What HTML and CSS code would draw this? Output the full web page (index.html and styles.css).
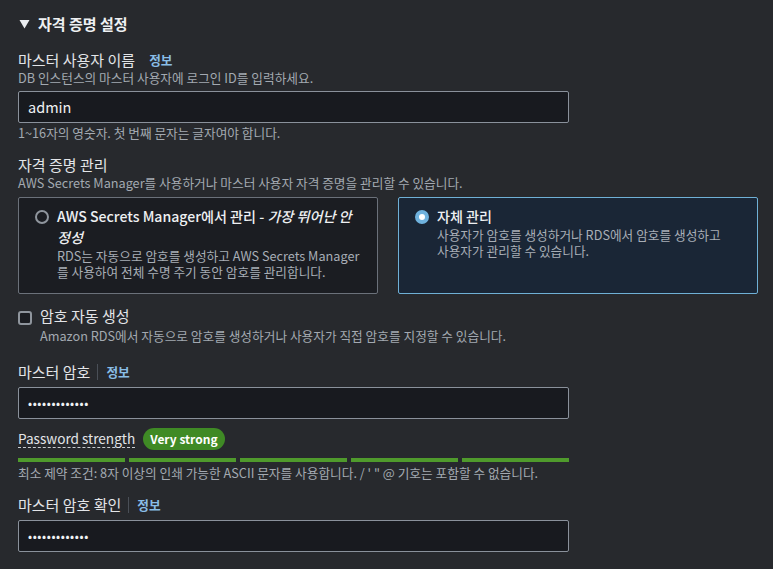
FILE: index.html
```html
<html>
<head>
<meta charset="utf-8">
<link rel="stylesheet" href="styles.css">
</head>
<body>
<div class="panel">
	<h2 class="section-title">
		<svg class="caret" width="11" height="10" viewBox="0 0 11 10"><path d="M0.5 1 L10.5 1 L5.5 9.5 Z" fill="#eaedf0"/></svg>
		자격 증명 설정
	</h2>

	<div class="field first">
		<div class="label">마스터 사용자 이름 <a class="info plain">정보</a></div>
		<div class="desc">DB 인스턴스의 마스터 사용자에 로그인 ID를 입력하세요.</div>
		<div class="input">admin</div>
		<div class="hint">1~16자의 영숫자. 첫 번째 문자는 글자여야 합니다.</div>
	</div>

	<div class="field">
		<div class="label">자격 증명 관리</div>
		<div class="desc">AWS Secrets Manager를 사용하거나 마스터 사용자 자격 증명을 관리할 수 있습니다.</div>
		<div class="cards">
			<div class="card">
				<span class="radio"></span>
				<div class="card-body">
					<div class="card-title">AWS Secrets Manager에서 관리 - <i>가장 뛰어난 안정성</i></div>
					<div class="card-desc">RDS는 자동으로 암호를 생성하고 AWS Secrets Manager를 사용하여 전체 수명 주기 동안 암호를 관리합니다.</div>
				</div>
			</div>
			<div class="card selected">
				<span class="radio checked"></span>
				<div class="card-body">
					<div class="card-title">자체 관리</div>
					<div class="card-desc keep">사용자가 암호를 생성하거나 RDS에서 암호를 생성하고 사용자가 관리할 수 있습니다.</div>
				</div>
			</div>
		</div>
	</div>

	<div class="check-row">
		<span class="checkbox"></span>
		<div>
			<div class="label">암호 자동 생성</div>
			<div class="desc gap">Amazon RDS에서 자동으로 암호를 생성하거나 사용자가 직접 암호를 지정할 수 있습니다.</div>
		</div>
	</div>

	<div class="field pw">
		<div class="label">마스터 암호 <span class="sep"></span><a class="info">정보</a></div>
		<div class="input dots">•••••••••••••</div>
		<div class="strength">
			<span class="strength-label">Password strength</span>
			<span class="badge">Very strong</span>
		</div>
		<div class="bars"><span></span><span></span><span></span><span></span><span></span></div>
		<div class="hint">최소 제약 조건: 8자 이상의 인쇄 가능한 ASCII 문자를 사용합니다. / ' " @ 기호는 포함할 수 없습니다.</div>
	</div>

	<div class="field confirm">
		<div class="label">마스터 암호 확인 <span class="sep"></span><a class="info">정보</a></div>
		<div class="input dots">•••••••••••••</div>
	</div>
</div>
</body>
</html>
```

FILE: styles.css
```css
body {
	margin: 0;
	background: #27292d;
	font-family: "Noto Sans CJK KR", "Noto Sans", sans-serif;
	color: #e6e8eb;
}

.panel {
	padding: 14px 15px 0 18px;
}

.section-title {
	margin: 0;
	display: flex;
	align-items: center;
	font-size: 15px;
	font-weight: bold;
	line-height: 20px;
	color: #eef0f2;
}

.caret {
	margin: 0 8px 0 1px;
}

.field.first {
	margin-top: 16px;
}

.field {
	margin-top: 14px;
}

.label {
	font-size: 15px;
	line-height: 20px;
	color: #e3e5e8;
	display: flex;
	align-items: center;
}

.info {
	color: #89bde6;
	font-size: 12.7px;
	font-weight: bold;
}

.info.plain {
	margin-left: 14px;
}

.sep {
	display: inline-block;
	width: 1px;
	height: 16px;
	background: #4a4f57;
	margin: 0 8px 0 7px;
}

.desc, .hint {
	font-size: 12.7px;
	line-height: 16px;
	color: #a3a9b1;
}

.desc.gap {
	margin-top: 2px;
}

.input {
	margin-top: 5px;
	width: 551px;
	height: 32px;
	box-sizing: border-box;
	border: 1px solid #8a919b;
	border-radius: 2px;
	background: #181a1f;
	padding: 0 9px;
	font-size: 14.5px;
	line-height: 30px;
	color: #f0f2f4;
}

.input.dots {
	font-size: 12px;
	letter-spacing: 0.6px;
}

.hint {
	margin-top: 2px;
}

.cards {
	margin-top: 6px;
	display: grid;
	grid-template-columns: 1fr 1fr;
	gap: 20px;
}

.card {
	display: flex;
	gap: 8px;
	padding: 8px 16px 13px 16px;
	border: 1px solid #6b717a;
	border-radius: 2px;
	background: #1b1d22;
}

.card.selected {
	border-color: #6fb0d6;
	background: #1a2636;
}

.radio {
	flex: none;
	width: 14px;
	height: 14px;
	margin-top: 4px;
	box-sizing: border-box;
	border: 2px solid #8f959d;
	border-radius: 50%;
}

.radio.checked {
	border: 4px solid #6fb2de;
	background: #ffffff;
}

.card-title {
	font-size: 14.1px;
	line-height: 21px;
	color: #eef0f2;
	font-weight: 500;
}

.card-desc {
	font-size: 12.7px;
	line-height: 16px;
	color: #a8aeb6;
}

.card-desc.keep {
	word-break: keep-all;
}

.check-row {
	margin-top: 12px;
	display: flex;
	gap: 8px;
}

.checkbox {
	flex: none;
	width: 14px;
	height: 14px;
	margin-top: 5px;
	box-sizing: border-box;
	border: 2px solid #8f959d;
	border-radius: 3px;
	background: #1b1d22;
}

.field.pw {
	margin-top: 18px;
}

.strength {
	margin-top: 9px;
	display: flex;
	align-items: center;
	gap: 8px;
	height: 22px;
}

.strength-label {
	font-size: 13.6px;
	line-height: 17px;
	color: #e3e5e8;
	border-bottom: 1px dashed #c8ccd1;
}

.badge {
	background: #3f8a25;
	color: #ffffff;
	font-size: 12px;
	font-weight: bold;
	line-height: 22px;
	padding: 0 7px;
	border-radius: 11px;
}

.bars {
	margin-top: 8px;
	width: 551px;
	display: flex;
	gap: 4px;
}

.bars span {
	flex: 1;
	height: 4px;
	background: #4f9a2c;
}

.pw .hint {
	margin-top: 3px;
}

.field.confirm {
	margin-top: 14px;
}
```
